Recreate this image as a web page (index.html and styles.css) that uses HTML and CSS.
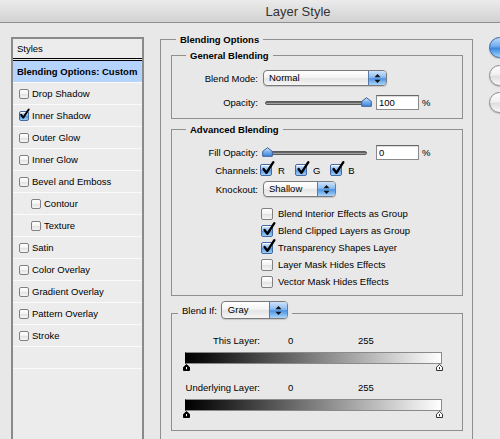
FILE: index.html
```html
<!DOCTYPE html>
<html>
<head>
<meta charset="utf-8">
<title>Layer Style</title>
<link rel="stylesheet" href="styles.css">
</head>
<body>
<div class="window">
  <div class="titlebar"><span class="title">Layer Style</span></div>
  <div class="content">
    <div class="styles-panel">
      <div class="panel-header">Styles</div>
      <div class="panel-row selected">Blending Options: Custom</div>
      <div class="panel-row"><span class="cb"></span>Drop Shadow</div>
      <div class="panel-row"><span class="cb on"><svg viewBox="0 0 12 12" width="12" height="12"><path d="M2.2 6.2 L4.6 9.4 L10.6 0.6" fill="none" stroke="#000" stroke-width="2.1" stroke-linecap="round" stroke-linejoin="round"/></svg></span>Inner Shadow</div>
      <div class="panel-row"><span class="cb"></span>Outer Glow</div>
      <div class="panel-row"><span class="cb"></span>Inner Glow</div>
      <div class="panel-row"><span class="cb"></span>Bevel and Emboss</div>
      <div class="panel-row sub"><span class="cb"></span>Contour</div>
      <div class="panel-row sub"><span class="cb"></span>Texture</div>
      <div class="panel-row"><span class="cb"></span>Satin</div>
      <div class="panel-row"><span class="cb"></span>Color Overlay</div>
      <div class="panel-row"><span class="cb"></span>Gradient Overlay</div>
      <div class="panel-row"><span class="cb"></span>Pattern Overlay</div>
      <div class="panel-row"><span class="cb"></span>Stroke</div>
      <div class="panel-row"></div>
    </div>

    <div class="main">
      <div class="group outer">
        <div class="group-title outer-title">Blending Options</div>

        <div class="group inner general">
          <div class="group-title">General Blending</div>
          <div class="row first-row">
            <span class="lbl">Blend Mode:</span>
            <div class="popup blend-mode">
              <span class="popup-text">Normal</span>
              <span class="popup-arrows"><svg width="7" height="11" viewBox="0 0 7 11"><path d="M3.5 1 L6.5 4.2 H0.5 Z M3.5 10 L6.5 6.8 H0.5 Z" fill="#111"/></svg></span>
            </div>
          </div>
          <div class="row input-row opacity-row">
            <span class="lbl">Opacity:</span>
            <div class="slider">
              <div class="track"></div>
              <svg class="thumb thumb-end" width="11" height="10" viewBox="0 0 11 10"><defs><linearGradient id="tg1" x1="0" y1="0" x2="0" y2="1"><stop offset="0" stop-color="#d4e8fd"/><stop offset="0.5" stop-color="#78b0ee"/><stop offset="1" stop-color="#3f86dc"/></linearGradient></defs><path d="M5.5 0.7 L10.3 4.4 V9.3 H0.7 V4.4 Z" fill="url(#tg1)" stroke="#3a5e98" stroke-width="1" stroke-linejoin="round"/></svg>
            </div>
            <span class="num">100</span>
            <span class="pct">%</span>
          </div>
        </div>

        <div class="group inner advanced">
          <div class="group-title">Advanced Blending</div>
          <div class="row input-row fill-row">
            <span class="lbl">Fill Opacity:</span>
            <div class="slider">
              <div class="track"></div>
              <svg class="thumb thumb-start" width="11" height="10" viewBox="0 0 11 10"><defs><linearGradient id="tg2" x1="0" y1="0" x2="0" y2="1"><stop offset="0" stop-color="#d4e8fd"/><stop offset="0.5" stop-color="#78b0ee"/><stop offset="1" stop-color="#3f86dc"/></linearGradient></defs><path d="M5.5 0.7 L10.3 4.4 V9.3 H0.7 V4.4 Z" fill="url(#tg2)" stroke="#3a5e98" stroke-width="1" stroke-linejoin="round"/></svg>
            </div>
            <span class="num">0</span>
            <span class="pct">%</span>
          </div>
          <div class="row channels-row">
            <span class="lbl">Channels:</span>
            <div class="channels">
              <span class="ch"><span class="cb big on"><svg viewBox="0 0 12 12" width="13" height="13"><path d="M2.4 6.4 L5 10 L11.4 0.2" fill="none" stroke="#000" stroke-width="2.2" stroke-linecap="round" stroke-linejoin="round"/></svg></span>R</span>
              <span class="ch"><span class="cb big on"><svg viewBox="0 0 12 12" width="13" height="13"><path d="M2.4 6.4 L5 10 L11.4 0.2" fill="none" stroke="#000" stroke-width="2.2" stroke-linecap="round" stroke-linejoin="round"/></svg></span>G</span>
              <span class="ch"><span class="cb big on"><svg viewBox="0 0 12 12" width="13" height="13"><path d="M2.4 6.4 L5 10 L11.4 0.2" fill="none" stroke="#000" stroke-width="2.2" stroke-linecap="round" stroke-linejoin="round"/></svg></span>B</span>
            </div>
          </div>
          <div class="row knockout-row">
            <span class="lbl">Knockout:</span>
            <div class="popup knockout">
              <span class="popup-text">Shallow</span>
              <span class="popup-arrows"><svg width="7" height="11" viewBox="0 0 7 11"><path d="M3.5 1 L6.5 4.2 H0.5 Z M3.5 10 L6.5 6.8 H0.5 Z" fill="#111"/></svg></span>
            </div>
          </div>
          <div class="checks">
            <div class="check-row"><span class="cb big"></span>Blend Interior Effects as Group</div>
            <div class="check-row"><span class="cb big on"><svg viewBox="0 0 12 12" width="13" height="13"><path d="M2.4 6.4 L5 10 L11.4 0.2" fill="none" stroke="#000" stroke-width="2.2" stroke-linecap="round" stroke-linejoin="round"/></svg></span>Blend Clipped Layers as Group</div>
            <div class="check-row"><span class="cb big on"><svg viewBox="0 0 12 12" width="13" height="13"><path d="M2.4 6.4 L5 10 L11.4 0.2" fill="none" stroke="#000" stroke-width="2.2" stroke-linecap="round" stroke-linejoin="round"/></svg></span>Transparency Shapes Layer</div>
            <div class="check-row"><span class="cb big"></span>Layer Mask Hides Effects</div>
            <div class="check-row"><span class="cb big"></span>Vector Mask Hides Effects</div>
          </div>
        </div>

        <div class="group inner blendif">
          <div class="group-title blendif-title">
            <span>Blend If:</span>
            <div class="popup gray">
              <span class="popup-text">Gray</span>
              <span class="popup-arrows"><svg width="7" height="11" viewBox="0 0 7 11"><path d="M3.5 1 L6.5 4.2 H0.5 Z M3.5 10 L6.5 6.8 H0.5 Z" fill="#111"/></svg></span>
            </div>
          </div>
          <div class="bi-row bi-first">
            <span class="bi-lbl">This Layer:</span>
            <span class="bi-0">0</span>
            <span>255</span>
          </div>
          <div class="gbar"></div>
          <div class="gthumbs">
            <svg width="7" height="7" viewBox="0 0 7 7"><path d="M3.5 0.5 L6.5 3.2 V6.5 H0.5 V3.2 Z" fill="#000" stroke="#000"/><path d="M3.5 3 V5.2" stroke="#fff" stroke-width="1"/></svg>
            <svg width="7" height="7" viewBox="0 0 7 7"><path d="M3.5 0.5 L6.5 3.2 V6.5 H0.5 V3.2 Z" fill="#fff" stroke="#333"/><path d="M3.5 3 V5.2" stroke="#333" stroke-width="1"/></svg>
          </div>
          <div class="bi-row bi-second">
            <span class="bi-lbl">Underlying Layer:</span>
            <span class="bi-0">0</span>
            <span>255</span>
          </div>
          <div class="gbar"></div>
          <div class="gthumbs">
            <svg width="7" height="7" viewBox="0 0 7 7"><path d="M3.5 0.5 L6.5 3.2 V6.5 H0.5 V3.2 Z" fill="#000" stroke="#000"/><path d="M3.5 3 V5.2" stroke="#fff" stroke-width="1"/></svg>
            <svg width="7" height="7" viewBox="0 0 7 7"><path d="M3.5 0.5 L6.5 3.2 V6.5 H0.5 V3.2 Z" fill="#fff" stroke="#333"/><path d="M3.5 3 V5.2" stroke="#333" stroke-width="1"/></svg>
          </div>
        </div>
      </div>
    </div>

    <div class="buttons">
      <div class="aqua-btn default"></div>
      <div class="aqua-btn"></div>
      <div class="aqua-btn"></div>
    </div>
  </div>
</div>
</body>
</html>
```
FILE: styles.css
```css
* { box-sizing: border-box; }

body {
  margin: 0;
  font-family: "Liberation Sans", Arial, sans-serif;
  font-size: 9.5px;
  color: #000;
  background: #e8e8e8;
}

.window {
  width: 500px;
  height: 439px;
  overflow: hidden;
  background: #e8e8e8;
}

.titlebar {
  height: 23px;
  border-bottom: 1px solid #8e8e8e;
  background: linear-gradient(#ebebeb, #d2d2d2);
  display: flex;
  justify-content: center;
  align-items: center;
  padding-left: 96px;
  font-size: 13px;
  color: #333;
}

.content {
  display: flex;
  align-items: flex-start;
}

/* left styles list */
.styles-panel {
  flex: none;
  margin: 14px 0 0 11px;
  width: 133px;
  height: 420px;
  border: 2px solid #8a8a8a;
  border-bottom: none;
  background: #ececec;
}

.panel-header {
  height: 22px;
  line-height: 19px;
  padding-left: 4px;
  border-bottom: 3px double #000;
}

.panel-row {
  height: 22px;
  border-bottom: 1px solid #fbfbfb;
  display: flex;
  align-items: center;
  gap: 3px;
  padding-left: 6px;
}

.panel-row.selected {
  background: #b5d4fd;
  font-weight: bold;
  padding-left: 4px;
}

.panel-row.sub { padding-left: 18px; }

/* checkboxes */
.cb {
  flex: none;
  display: inline-block;
  position: relative;
  width: 10px;
  height: 10px;
  border: 1px solid #808080;
  border-radius: 2px;
  background: linear-gradient(#ffffff, #f3f3f3 50%, #e2e2e2 51%, #f6f6f6);
  box-shadow: inset 0 1px 0 #fff;
}

.cb.big {
  width: 12px;
  height: 12px;
}

.cb.on {
  border-color: #4468a3;
  background: linear-gradient(#d3e8fe, #8ebef3 45%, #5498e6 52%, #9ed0fa);
}

.cb.on svg {
  position: absolute;
  left: 0;
  top: -3px;
  overflow: visible;
}

.panel-row .cb.on svg { left: -1px; top: -3px; width: 11px; height: 11px; }

/* main area */
.main {
  flex: none;
  margin: 16px 0 0 16px;
  width: 313px;
}

.group {
  border: 1px solid #8f8f8f;
}

.outer {
  height: 430px;
  border-bottom: none;
}

.group-title {
  margin: -7px 0 0 14px;
  padding: 0 4px;
  height: 13px;
  line-height: 13px;
  width: max-content;
  background: #e8e8e8;
  font-weight: bold;
}

.outer-title { margin-left: 15px; }

.inner {
  margin: 9px 9px 0 10px;
}

.general { padding-bottom: 8px; }

.advanced {
  margin-top: 10px;
  padding-bottom: 5px;
}

.blendif {
  margin-top: 17px;
  padding-bottom: 12px;
}

.row {
  display: flex;
  align-items: center;
  gap: 5px;
}

.lbl {
  flex: none;
  width: 86px;
  text-align: right;
}

.first-row { margin-top: 8px; height: 16px; }
.opacity-row { margin-top: 9px; }
.input-row { height: 15px; }
.fill-row { margin-top: 9px; }
.channels-row { margin-top: 3px; height: 14px; gap: 2px; }
.knockout-row { margin-top: 4px; height: 16px; }

/* popup menus */
.popup {
  flex: none;
  display: flex;
  align-items: stretch;
  height: 16px;
  border: 1px solid #7a7a7a;
  border-radius: 4px;
  background: linear-gradient(#ffffff, #f4f4f4 45%, #e4e4e4 55%, #f5f5f5);
  overflow: hidden;
  box-shadow: 0 1px 1px rgba(0,0,0,0.15);
}

.popup-text {
  flex: 1;
  padding-left: 5px;
  line-height: 14px;
}

.popup-arrows {
  flex: none;
  width: 18px;
  display: flex;
  align-items: center;
  justify-content: center;
  border-left: 1px solid #5b79a8;
  background: linear-gradient(#cfe3fb, #8dbdf1 45%, #4f94e3 55%, #a9d5fb);
}

.blend-mode { width: 124px; }
.knockout { width: 73px; }

/* sliders */
.slider {
  flex: none;
  position: relative;
  width: 102px;
  height: 15px;
  margin-left: 2px;
  display: flex;
  align-items: center;
}

.track {
  width: 100%;
  height: 4px;
  border-radius: 2px;
  background: linear-gradient(#4d4d4d, #8a8a8a 60%, #c4c4c4);
  border: 1px solid #5a5a5a;
}

.thumb {
  position: absolute;
  top: 2px;
}

.thumb-end { right: -5px; }
.thumb-start { left: -3px; }

.num {
  flex: none;
  width: 43px;
  height: 15px;
  margin-left: 4px;
  border: 1px solid #8a8a8a;
  border-top-color: #666;
  background: #fff;
  padding-left: 2px;
  line-height: 13px;
  box-shadow: inset 0 1px 1px rgba(0,0,0,0.15);
}

.pct {
  margin-left: -2px;
}

/* channels */
.channels {
  display: flex;
  align-items: center;
}

.ch {
  display: flex;
  align-items: center;
  gap: 6px;
  margin-right: 10px;
}

/* checkbox list */
.checks { margin-top: 8px; }

.check-row {
  height: 17px;
  display: flex;
  align-items: center;
  gap: 5px;
  padding-left: 89px;
}

/* blend if */
.blendif-title {
  display: flex;
  align-items: center;
  gap: 4px;
  margin: -13px 0 0 6px;
  height: 18px;
  padding: 0 4px 0 4px;
  font-weight: normal;
}

.popup.gray {
  width: 67px;
  height: 18px;
}

.popup.gray .popup-text { line-height: 16px; padding-left: 6px; }

.bi-row {
  display: flex;
  align-items: center;
  height: 14px;
}

.bi-first { margin-top: 14px; }
.bi-second { margin-top: 9px; }

.bi-lbl {
  flex: none;
  width: 88px;
  text-align: right;
}

.bi-0 {
  flex: none;
  width: 70px;
  margin-left: 28px;
}

.gbar {
  margin: 5px 0 0 13px;
  width: 257px;
  height: 12px;
  border: 1px solid #8a8a8a;
  border-left-color: #000;
  background: linear-gradient(to right, #000 0%, #111 8%, #fff 100%);
}

.gthumbs {
  margin-left: 11px;
  width: 260px;
  height: 7px;
  display: flex;
  justify-content: space-between;
}

.gthumbs svg { display: block; }

/* aqua buttons on the right edge */
.buttons {
  flex: none;
  margin: 14px 0 0 16px;
  display: flex;
  flex-direction: column;
  gap: 6.5px;
}

.aqua-btn {
  width: 70px;
  height: 21px;
  border-radius: 11px;
  border: 1px solid #8a8a8a;
  background: linear-gradient(#fdfdfd, #f0f0f0 45%, #dedede 55%, #f8f8f8);
  box-shadow: 0 1px 1px rgba(0,0,0,0.2);
}

.aqua-btn.default {
  border-color: #3d62a0;
  background: linear-gradient(#b9dafc, #74afee 42%, #3e88dd 55%, #6fb3f2 80%, #a7d8fd);
}
```
